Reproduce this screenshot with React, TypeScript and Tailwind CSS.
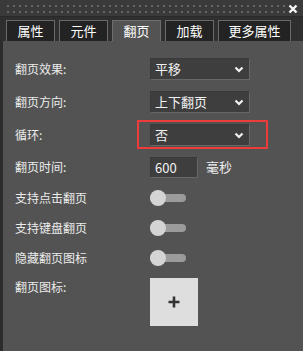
import { useState } from "react";

const tabs = ["属性", "元件", "翻页", "加载", "更多属性"];

const Chevron = () => (
  <svg width="10" height="7" viewBox="0 0 10 7" className="absolute right-[5px] top-[7px]">
    <polyline points="1.5,1.5 5,5 8.5,1.5" fill="none" stroke="#f2f2f2" strokeWidth="2.2" />
  </svg>
);

const Select = ({ value }: { value: string }) => (
  <div className="relative w-[100px] h-[22px] bg-[#3e3e3e] border border-[#3a3a3a] border-r-[#676767] border-b-[#676767] pl-[4px] text-[13px] leading-[20px] text-[#f2f2f2]">
    {value}
    <Chevron />
  </div>
);

const Toggle = () => (
  <div className="relative w-[36px] h-[16px] flex items-center">
    <div className="w-full h-[8px] rounded-full bg-[#9b9b9b]" />
    <div className="absolute left-0 top-0 w-[16px] h-[16px] rounded-full bg-[#d4d4d4]" />
  </div>
);

export default function App() {
  const [activo] = useState(2);

  return (
    <div
      className="w-[303px] h-[351px] flex flex-col bg-[#2c2c2c] overflow-hidden"
      style={{ fontFamily: '"Noto Sans CJK SC", "Noto Sans", sans-serif' }}
    >
      {/* barra superior con puntos */}
      <div className="relative h-[17px] bg-[#3a3a3a] border-b border-[#2a2a2a]">
        <svg width="288" height="17" className="absolute left-0 top-0">
          <defs>
            <pattern id="dots" x="7" y="5" width="6" height="6" patternUnits="userSpaceOnUse">
              <rect x="0" y="0" width="2" height="2" fill="#666" />
            </pattern>
          </defs>
          <rect x="7" y="5" width="280" height="8" fill="url(#dots)" />
        </svg>
        <svg width="10" height="10" viewBox="0 0 10 10" className="absolute right-[5px] top-[4px]">
          <path d="M1.5 1.5 L8.5 8.5 M8.5 1.5 L1.5 8.5" stroke="#f5f5f5" strokeWidth="2.4" />
        </svg>
      </div>

      {/* pestañas */}
      <div className="h-[24px] flex items-end gap-[4px] pl-[6px] bg-[#2f2f2f]">
        {tabs.map((t, i) => (
          <div
            key={t}
            className={
              i === activo
                ? "w-[49px] h-[21px] flex items-center justify-center text-[13px] text-white bg-[#535353] border border-b-0 border-[#6e6e6e]"
                : i === 4
                ? "w-[73px] h-[21px] flex items-center justify-center text-[13px] text-white bg-[#232323] border border-b-0 border-[#6a6a6a]"
                : "w-[49px] h-[21px] flex items-center justify-center text-[13px] text-white bg-[#232323] border border-b-0 border-[#6a6a6a]"
            }
          >
            {t}
          </div>
        ))}
      </div>

      {/* contenido */}
      <div className="flex-1 ml-[3px] bg-[#535353] pt-[11px] pl-[12px] text-[12px] text-[#ececec]">
        <div className="h-[33px] flex items-center">
          <span className="w-[135px]">翻页效果:</span>
          <Select value="平移" />
        </div>
        <div className="h-[33px] flex items-center">
          <span className="w-[135px]">翻页方向:</span>
          <Select value="上下翻页" />
        </div>
        <div className="h-[33px] flex items-center">
          <span className="w-[135px]">循环:</span>
          <div className="relative">
            <Select value="否" />
            <div className="absolute -left-[13px] -top-[4px] w-[131px] h-[29px] border-2 border-[#ee3b3b]" />
          </div>
        </div>
        <div className="h-[32px] flex items-center">
          <span className="w-[135px]">翻页时间:</span>
          <div className="w-[48px] h-[21px] bg-[#3e3e3e] border border-[#3a3a3a] border-r-[#676767] border-b-[#676767] pl-[4px] text-[13px] leading-[19px] text-[#f2f2f2]">
            600
          </div>
          <span className="ml-[8px] text-[13px]">毫秒</span>
        </div>
        <div className="h-[30px] flex items-center">
          <span className="w-[135px]">支持点击翻页</span>
          <Toggle />
        </div>
        <div className="h-[30px] flex items-center">
          <span className="w-[135px]">支持键盘翻页</span>
          <Toggle />
        </div>
        <div className="h-[30px] flex items-center">
          <span className="w-[135px]">隐藏翻页图标</span>
          <Toggle />
        </div>
        <div className="mt-[5px] flex items-start">
          <span className="w-[135px] leading-[18px]">翻页图标:</span>
          <div className="w-[48px] h-[48px] bg-[#dedede] flex items-center justify-center">
            <svg width="12" height="12" viewBox="0 0 12 12">
              <path d="M6 0.5 V11.5 M0.5 6 H11.5" stroke="#333" strokeWidth="2.6" />
            </svg>
          </div>
        </div>
      </div>
    </div>
  );
}
